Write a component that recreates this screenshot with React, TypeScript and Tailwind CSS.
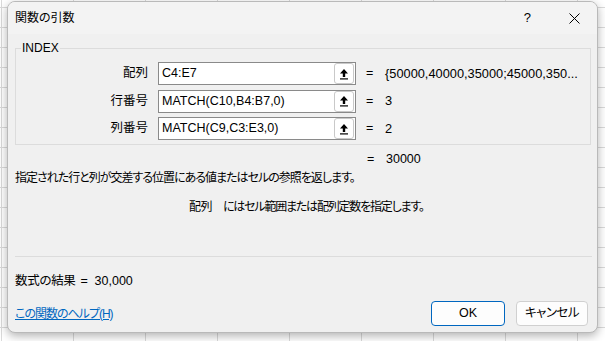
import React from "react";

const font = "font-['Liberation_Sans','Noto_Sans_CJK_JP',sans-serif]";

function RefButton() {
  return (
    <div className="ml-auto mr-px flex h-[21px] w-[20px] items-center justify-center rounded-[3px] border border-[#c9c9c9] bg-white">
      <svg width="10" height="12" viewBox="0 0 10 12">
        <path d="M5 1 L9 5.5 L6.2 5.5 L6.2 9 L3.8 9 L3.8 5.5 L1 5.5 Z" fill="#000" />
        <rect x="1" y="10.3" width="8" height="1.2" fill="#000" />
      </svg>
    </div>
  );
}

export default function App() {
  const args = [
    { label: "配列", value: "C4:E7", result: "{50000,40000,35000;45000,350..." },
    { label: "行番号", value: "MATCH(C10,B4:B7,0)", result: "3" },
    { label: "列番号", value: "MATCH(C9,C3:E3,0)", result: "2" },
  ];

  return (
    <div
      className={`h-[341px] w-[605px] overflow-hidden bg-white bg-[linear-gradient(to_right,#dadada_1px,transparent_1px),linear-gradient(to_bottom,#dadada_1px,transparent_1px)] bg-[size:72px_20px] bg-[position:1px_7px] pl-[7px] pt-px ${font} text-black`}
    >
      <div className="flex h-[332px] w-[591px] flex-col overflow-hidden rounded-lg border border-[#b9b9b9] bg-[#f0f0f0] shadow-[0_3px_10px_rgba(0,0,0,0.3)]">
        {/* title bar */}
        <div className="flex h-[32px] shrink-0 items-center bg-[#f3f3f3] pl-[7px]">
          <span className="text-[12px] [font-feature-settings:'palt']">関数の引数</span>
          <span className="ml-auto mr-[38px] text-[13px]">?</span>
          <svg width="11" height="11" viewBox="0 0 11 11" className="mr-[17px]">
            <path d="M0.5 0.5 L10.5 10.5 M10.5 0.5 L0.5 10.5" stroke="#000" strokeWidth="1" />
          </svg>
        </div>

        <div className="flex flex-1 flex-col px-[7px]">
          {/* argument group */}
          <div className="relative mt-[14px] h-[97px] w-[576px] border border-[#dcdcdc] pt-[13px]">
            <span className="absolute left-[5px] top-[-9px] bg-[#f0f0f0] px-px text-[12px] leading-[16px]">
              INDEX
            </span>
            <div className="flex flex-col gap-[4.5px]">
              {args.map((a) => (
                <div key={a.label} className="flex h-[23px] items-center">
                  <span className="w-[132px] text-right text-[12.5px] [font-feature-settings:'palt']">
                    {a.label}
                  </span>
                  <div className="ml-[10px] flex h-[23px] w-[198px] items-center border border-[#8a8a8a] bg-white pl-[3px]">
                    <span className="text-[12.5px]">{a.value}</span>
                    <RefButton />
                  </div>
                  <span className="ml-[10px] w-[19px] text-[12.5px]">=</span>
                  <span className="text-[12.8px]">{a.result}</span>
                </div>
              ))}
            </div>
          </div>

          <div className="mt-[6px] flex h-[16px] items-center pl-[352px] text-[12.5px]">
            <span className="w-[19px]">=</span>
            <span>30000</span>
          </div>
          <div className="mt-[3px] h-[16px] text-[12px] leading-[16px] tracking-[-1px] [font-feature-settings:'palt']">
            指定された行と列が交差する位置にある値またはセルの参照を返します。
          </div>
          <div className="mt-[13px] flex h-[16px] items-center pl-[174px] text-[12px] leading-[16px] [font-feature-settings:'palt']">
            <span className="w-[34px] tracking-[-0.5px]">配列</span>
            <span className="tracking-[-1.2px]">にはセル範囲または配列定数を指定します。</span>
          </div>

          <div className="mt-[41px] h-px w-[577px] bg-[#dcdcdc]" />

          <div className="mt-[16px] flex h-[16px] items-center text-[12.5px]">
            <span className="tracking-[-0.3px] [font-feature-settings:'palt']">数式の結果</span>
            <span className="ml-[5px] w-[12px]">=</span>
            <span className="ml-[2px]">30,000</span>
          </div>

          <div className="mt-[12px] flex items-center">
            <a className="text-[12px] tracking-[-1px] text-[#0067c0] underline [font-feature-settings:'palt']">
              この関数のヘルプ(H)
            </a>
            <button className="ml-auto flex h-[25px] w-[74px] items-center justify-center rounded-[4px] border border-[#0067c0] bg-[#fdfdfd] text-[12.5px]">
              OK
            </button>
            <button className="ml-[11px] mr-[2px] flex h-[25px] w-[72px] items-center justify-center rounded-[4px] border border-[#d0d0d0] bg-[#fdfdfd] text-[12.5px] tracking-[-0.5px] [font-feature-settings:'palt']">
              キャンセル
            </button>
          </div>
        </div>
      </div>
    </div>
  );
}
